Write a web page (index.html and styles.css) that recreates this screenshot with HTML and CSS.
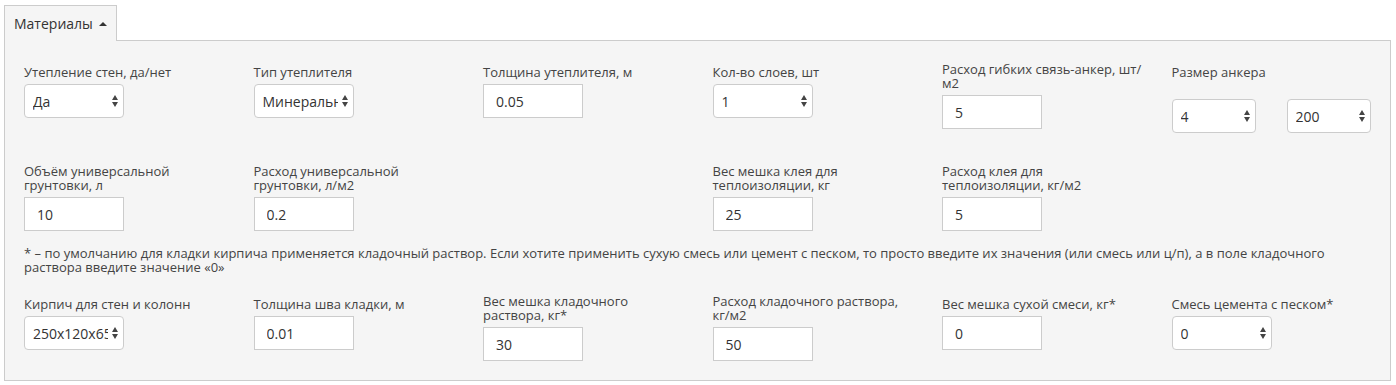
FILE: index.html
```html
<!DOCTYPE html>
<html lang="ru">
<head>
    <meta charset="UTF-8">
    <title>Материалы</title>
    <link rel="stylesheet" href="styles.css">
</head>
<body>
    <div class="tabs">
        <a href="#" class="tab">Материалы <span class="caret"></span></a>
    </div>

    <div class="panel">
        <div class="form-row">
            <div class="field">
                <label>Утепление стен, да/нет</label>
                <span class="select-wrap"><select><option>Да</option><option>Нет</option></select></span>
            </div>
            <div class="field">
                <label>Тип утеплителя</label>
                <span class="select-wrap"><select><option>Минеральная вата</option></select></span>
            </div>
            <div class="field">
                <label>Толщина утеплителя, м</label>
                <input type="text" value="0.05">
            </div>
            <div class="field">
                <label>Кол-во слоев, шт</label>
                <span class="select-wrap"><select><option>1</option><option>2</option></select></span>
            </div>
            <div class="field field-wrap">
                <label class="nowrap">Расход гибких связь-анкер, шт/<br>м2</label>
                <input type="text" value="5">
            </div>
            <div class="field">
                <label>Размер анкера</label>
                <div class="anchor-size">
                    <span class="select-wrap select-small"><select><option>4</option></select></span>
                    <span class="select-wrap select-small"><select><option>200</option></select></span>
                </div>
            </div>
        </div>

        <div class="form-row row-second">
            <div class="field field-wrap">
                <label>Объём универсальной грунтовки, л</label>
                <input type="text" value="10">
            </div>
            <div class="field field-wrap">
                <label>Расход универсальной грунтовки, л/м2</label>
                <input type="text" value="0.2">
            </div>
            <div></div>
            <div class="field field-wrap">
                <label>Вес мешка клея для теплоизоляции, кг</label>
                <input type="text" value="25">
            </div>
            <div class="field field-wrap">
                <label>Расход клея для теплоизоляции, кг/м2</label>
                <input type="text" value="5">
            </div>
        </div>

        <p class="note">* – по умолчанию для кладки кирпича применяется кладочный раствор. Если хотите применить сухую смесь или цемент с песком, то просто введите их значения (или смесь или ц/п), а в поле кладочного раствора введите значение «0»</p>

        <div class="form-row">
            <div class="field">
                <label>Кирпич для стен и колонн</label>
                <span class="select-wrap"><select><option>250x120x65</option></select></span>
            </div>
            <div class="field">
                <label>Толщина шва кладки, м</label>
                <input type="text" value="0.01">
            </div>
            <div class="field field-wrap">
                <label>Вес мешка кладочного раствора, кг*</label>
                <input type="text" value="30">
            </div>
            <div class="field field-wrap">
                <label>Расход кладочного раствора, кг/м2</label>
                <input type="text" value="50">
            </div>
            <div class="field">
                <label>Вес мешка сухой смеси, кг*</label>
                <input type="text" value="0">
            </div>
            <div class="field">
                <label>Смесь цемента с песком*</label>
                <span class="select-wrap"><select><option>0</option></select></span>
            </div>
        </div>
    </div>
</body>
</html>
```

FILE: styles.css
```css
:root {
    --color-border: #cccccc;
    --color-panel: #f5f5f5;
    --color-text: #444444;
    --color-value: #333333;
    --font-sans: 'Open Sans', 'DejaVu Sans', sans-serif;
}

* {
    margin: 0;
    padding: 0;
    box-sizing: border-box;
}

html, body {
    background: #fff;
    color: var(--color-text);
    font-family: var(--font-sans);
}

body {
    padding: 5px 5px 0 4px;
}

.tabs {
    display: flex;
}

.tab {
    display: flex;
    align-items: center;
    gap: 6px;
    height: 36px;
    padding: 0 9px 1px 9px;
    margin-bottom: -1px;
    position: relative;
    z-index: 1;
    background: var(--color-panel);
    border: 1px solid var(--color-border);
    border-bottom: none;
    color: var(--color-value);
    font-size: 14px;
    text-decoration: none;
}

.caret {
    width: 0;
    height: 0;
    border-left: 4px solid transparent;
    border-right: 4px solid transparent;
    border-bottom: 4px solid var(--color-value);
    margin-top: 1px;
}

.panel {
    background: var(--color-panel);
    border: 1px solid var(--color-border);
    padding: 21px 19px 19px 19px;
}

.form-row {
    display: grid;
    grid-template-columns: repeat(6, 1fr);
    column-gap: 30px;
    align-items: start;
}

.row-second {
    margin-top: 31px;
}

.field {
    padding-top: 3px;
}

.field-wrap {
    padding-top: 0;
}

label {
    display: block;
    font-size: 13px;
    line-height: 14px;
    margin-bottom: 5px;
}

.nowrap {
    white-space: nowrap;
}

input[type="text"] {
    display: block;
    width: 100px;
    height: 34px;
    padding: 0 12px;
    border: 1px solid var(--color-border);
    background: #fff;
    color: var(--color-value);
    font-family: var(--font-sans);
    font-size: 14px;
    outline: none;
}

.select-wrap {
    display: block;
    position: relative;
    width: 100px;
    height: 34px;
}

.select-wrap select {
    -webkit-appearance: none;
    appearance: none;
    width: 100%;
    height: 100%;
    padding: 0 15px 0 8px;
    border: 1px solid var(--color-border);
    border-radius: 4px;
    background: #fff;
    color: var(--color-value);
    font-family: var(--font-sans);
    font-size: 14px;
    outline: none;
}

.select-wrap::before,
.select-wrap::after {
    content: '';
    position: absolute;
    right: 6px;
    width: 0;
    height: 0;
    border-left: 3px solid transparent;
    border-right: 3px solid transparent;
    pointer-events: none;
}

.select-wrap::before {
    top: 11px;
    border-bottom: 5px solid #444;
}

.select-wrap::after {
    top: 18px;
    border-top: 5px solid #444;
}

.anchor-size {
    display: flex;
    gap: 31px;
    margin-top: 20px;
}

.select-small {
    width: 84px;
}

.note {
    margin-top: 15px;
    margin-bottom: 20px;
    font-size: 13px;
    line-height: 14px;
}
```
